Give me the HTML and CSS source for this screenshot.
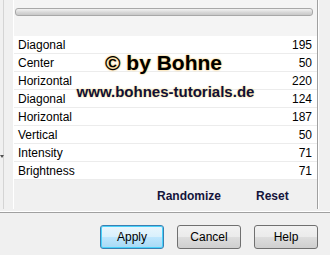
FILE: index.html
```html
<!DOCTYPE html>
<html lang="en">
<head>
    <meta charset="UTF-8">
    <title>Settings</title>
    <link rel="stylesheet" href="styles.css">
</head>
<body>
    <div class="window">
        <div class="side">
            <span class="arrow"></span>
        </div>
        <div class="panel">
            <div class="bar-area">
                <div class="bar"></div>
            </div>
            <ul class="list">
                <li><span>Diagonal</span><span>195</span></li>
                <li><span>Center</span><span>50</span></li>
                <li><span>Horizontal</span><span>220</span></li>
                <li><span>Diagonal</span><span>124</span></li>
                <li><span>Horizontal</span><span>187</span></li>
                <li><span>Vertical</span><span>50</span></li>
                <li><span>Intensity</span><span>71</span></li>
                <li><span>Brightness</span><span>71</span></li>
            </ul>
            <div class="actions">
                <span class="link randomize">Randomize</span>
                <span class="link reset">Reset</span>
            </div>
            <div class="watermark">
                <div class="wm-title">© by Bohne</div>
                <div class="wm-url">www.bohnes-tutorials.de</div>
            </div>
        </div>
        <div class="edge"></div>
    </div>
    <div class="footer">
        <button class="btn btn-default">Apply</button>
        <button class="btn">Cancel</button>
        <button class="btn">Help</button>
    </div>
</body>
</html>
```

FILE: styles.css
```css
body {
    margin: 0;
    width: 330px;
    height: 255px;
    overflow: hidden;
    background-color: #f0f0f0;
    font-family: "Liberation Sans", Arial, sans-serif;
    font-size: 12px;
    color: #000;
}

.window {
    display: flex;
    height: 209px;
}

.side {
    width: 9px;
    margin-left: 3px;
    border-left: 1px solid #d4d4d4;
    position: relative;
}

.arrow {
    position: absolute;
    left: -4px;
    top: 155px;
    width: 0;
    height: 0;
    border-left: 2px solid transparent;
    border-right: 2px solid transparent;
    border-top: 3px solid #505050;
}

.panel {
    position: relative;
    width: 303px;
    border-left: 1px solid #ffffff;
    border-right: 1px solid #a0a0a0;
}

.edge {
    flex: 1;
    border-left: 1px solid #ffffff;
}

.bar-area {
    height: 36px;
    padding-top: 8px;
    box-sizing: border-box;
    background-color: #f4f4f4;
}

.bar {
    height: 6px;
    margin-left: 1px;
    margin-right: 4px;
    border: 1px solid #a8a8a8;
    border-radius: 3px;
    background: linear-gradient(#f2f2f2, #d6d6d6 60%, #c8c8c8);
}

.list {
    list-style: none;
    margin: 0;
    padding: 0;
    background-color: #ffffff;
}

.list li {
    display: flex;
    justify-content: space-between;
    height: 18px;
    line-height: 19px;
    padding: 0 5px 0 4px;
    border-bottom: 1px solid #ececec;
    box-sizing: border-box;
}

.actions {
    display: flex;
    height: 28px;
    align-items: center;
    padding-top: 3px;
    box-sizing: border-box;
}

.link {
    font-weight: bold;
    color: #14143c;
}

.randomize {
    margin-left: 143px;
}

.reset {
    margin-left: 35px;
}

.watermark {
    position: absolute;
    left: 0;
    right: 0;
    top: 50px;
    text-align: center;
    font-weight: bold;
    color: #000;
    text-shadow: 0 0 2px #f5b020;
}

.wm-title {
    font-size: 21px;
    line-height: 26px;
    padding-right: 4px;
}

.wm-url {
    font-size: 15px;
    line-height: 20px;
    margin-top: 6px;
    text-shadow: 0 0 2px #f5d060;
    color: #10103a;
}

.footer {
    height: 46px;
    border-top: 1px solid #ffffff;
    box-shadow: inset 0 1px 0 #a0a0a0;
    margin-top: 2px;
    display: flex;
    justify-content: flex-end;
    align-items: flex-start;
    gap: 13px;
    padding: 13px 12px 0 0;
    box-sizing: border-box;
}

.btn {
    width: 64px;
    height: 24px;
    font-family: "Liberation Sans", Arial, sans-serif;
    font-size: 12px;
    color: #000;
    border: 1px solid #707070;
    border-radius: 3px;
    background: linear-gradient(#f2f2f2, #ebebeb 48%, #dddddd 52%, #cfcfcf);
    padding: 0;
}

.btn-default {
    border-color: #3c7fb1;
    background: linear-gradient(#eaf6fd, #d9f0fc 48%, #bee6fd 52%, #a7d9f5);
    box-shadow: inset 0 0 0 1px #48d2fb;
}
```
